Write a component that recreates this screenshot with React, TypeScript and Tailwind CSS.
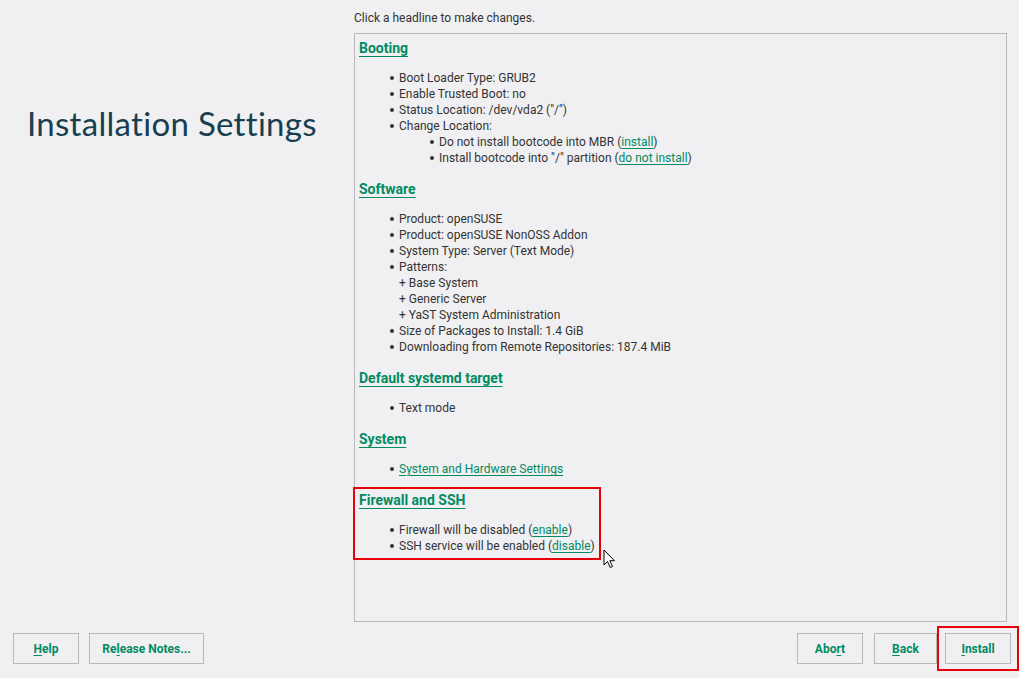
import React from "react";

const G = "text-[#008b62]";

function Bullet({ children, indent = 0 }: { children: React.ReactNode; indent?: number }) {
  return (
    <div className={`flex items-center h-4 ${indent ? "pl-[71px]" : "pl-[31px]"}`}>
      <span className="w-[4px] h-[4px] rounded-full bg-[#333] mr-[5px] shrink-0" />
      <span>{children}</span>
    </div>
  );
}

function Plain({ children }: { children: React.ReactNode }) {
  return <div className="h-4 pl-[40px] flex items-center">{children}</div>;
}

function Link({ children }: { children: React.ReactNode }) {
  return <span className={`${G} underline underline-offset-2 decoration-1`}>{children}</span>;
}

function Head({ children }: { children: React.ReactNode }) {
  return (
    <div className={`h-5 flex items-center text-[14px] font-bold ${G} underline underline-offset-[3px] decoration-1`}>
      <span>{children}</span>
    </div>
  );
}

function Section({ title, children, first }: { title: string; children: React.ReactNode; first?: boolean }) {
  return (
    <div className={first ? "" : "mt-[13px]"}>
      <Head>{title}</Head>
      <div className="mt-[12px]">{children}</div>
    </div>
  );
}

function Btn({ pre, u, post, w }: { pre: string; u: string; post: string; w: string }) {
  return (
    <div className={`${w} h-[31px] border border-[#b9b9b9] flex items-center justify-center text-[12px] font-bold ${G}`}>
      <span>
        {pre}
        <span className="underline underline-offset-2">{u}</span>
        {post}
      </span>
    </div>
  );
}

export default function App() {
  return (
    <div
      className="w-[1019px] h-[678px] bg-[#f0f0f2] text-[#333] text-[12px] relative overflow-hidden flex flex-col"
      style={{ fontFamily: "Roboto, 'Noto Sans', sans-serif" }}
    >
      <div className="flex flex-1">
        <div className="w-[354px] shrink-0 pt-[102px] pl-[27px]">
          <div
            className="text-[33px] text-[#173f4f] leading-[42px] tracking-[0.3px]"
            style={{ fontFamily: "Lato, 'Open Sans', sans-serif" }}
          >
            Installation Settings
          </div>
        </div>
        <div className="flex-1 flex flex-col pr-[12px]">
          <div className="h-[33px] flex items-center pt-[2px]">Click a headline to make changes.</div>
          <div className="relative w-[653px] h-[589px] border border-[#b9b9b9] pt-[4px] pl-[4px]">
            <Section title="Booting" first>
              <Bullet>Boot Loader Type: GRUB2</Bullet>
              <Bullet>Enable Trusted Boot: no</Bullet>
              <Bullet>Status Location: /dev/vda2 ("/")</Bullet>
              <Bullet>Change Location:</Bullet>
              <Bullet indent={1}>
                Do not install bootcode into MBR (<Link>install</Link>)
              </Bullet>
              <Bullet indent={1}>
                Install bootcode into "/" partition (<Link>do not install</Link>)
              </Bullet>
            </Section>
            <Section title="Software">
              <Bullet>Product: openSUSE</Bullet>
              <Bullet>Product: openSUSE NonOSS Addon</Bullet>
              <Bullet>System Type: Server (Text Mode)</Bullet>
              <Bullet>Patterns:</Bullet>
              <Plain>+ Base System</Plain>
              <Plain>+ Generic Server</Plain>
              <Plain>+ YaST System Administration</Plain>
              <Bullet>Size of Packages to Install: 1.4 GiB</Bullet>
              <Bullet>Downloading from Remote Repositories: 187.4 MiB</Bullet>
            </Section>
            <Section title="Default systemd target">
              <Bullet>Text mode</Bullet>
            </Section>
            <Section title="System">
              <Bullet>
                <Link>System and Hardware Settings</Link>
              </Bullet>
            </Section>
            <Section title="Firewall and SSH">
              <Bullet>
                Firewall will be disabled (<Link>enable</Link>)
              </Bullet>
              <Bullet>
                SSH service will be enabled (<Link>disable</Link>)
              </Bullet>
            </Section>
            <div className="absolute left-[-2px] top-[453px] w-[248px] h-[73px] border-2 border-[#e8000b] pointer-events-none" />
          </div>
        </div>
      </div>
      <div className="h-[56px] flex items-start pt-[11px] pl-[13px] pr-[8px]">
        <Btn pre="" u="H" post="elp" w="w-[66px]" />
        <div className="w-[10px]" />
        <Btn pre="Re" u="l" post="ease Notes..." w="w-[115px]" />
        <div className="flex-1" />
        <Btn pre="Abo" u="r" post="t" w="w-[66px]" />
        <div className="w-[11px]" />
        <Btn pre="" u="B" post="ack" w="w-[63px]" />
        <div className="w-[8px]" />
        <div className="relative">
          <Btn pre="" u="I" post="nstall" w="w-[66px]" />
          <div className="absolute left-[-8px] top-[-7px] w-[82px] h-[45px] border-2 border-[#e8000b]" />
        </div>
      </div>
      <svg className="absolute left-[603px] top-[549px]" width="13" height="20" viewBox="0 0 13 20">
        <path d="M1 1 L1 16 L4.5 12.5 L7.2 18.5 L9.5 17.5 L6.8 11.7 L11.5 11.7 Z" fill="#fff" stroke="#000" strokeWidth="1" strokeLinejoin="round" />
      </svg>
    </div>
  );
}
